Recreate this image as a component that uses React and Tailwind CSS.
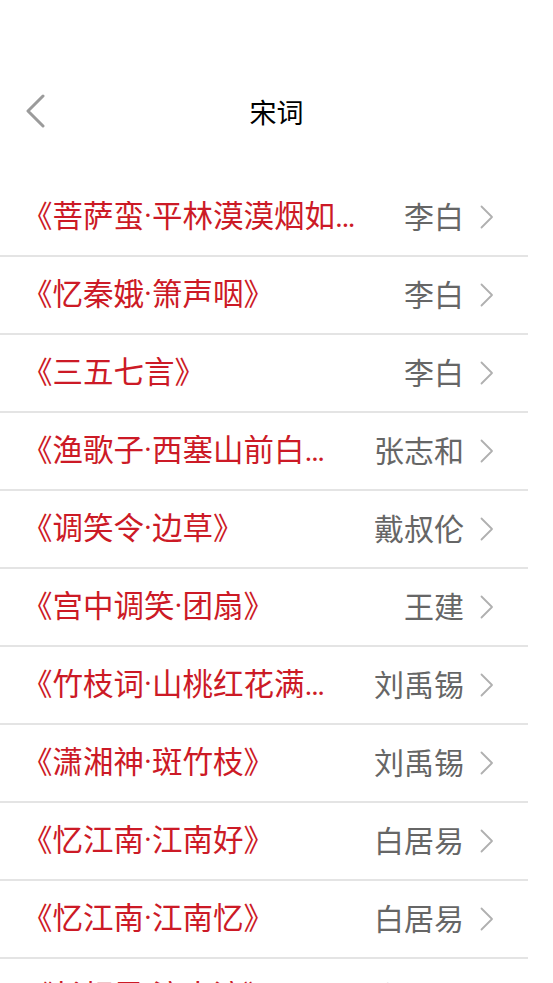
import React from "react";

const poems = [
  { title: "《菩萨蛮·平林漠漠烟如织》", author: "李白" },
  { title: "《忆秦娥·箫声咽》", author: "李白" },
  { title: "《三五七言》", author: "李白" },
  { title: "《渔歌子·西塞山前白鹭飞》", author: "张志和" },
  { title: "《调笑令·边草》", author: "戴叔伦" },
  { title: "《宫中调笑·团扇》", author: "王建" },
  { title: "《竹枝词·山桃红花满上头》", author: "刘禹锡" },
  { title: "《潇湘神·斑竹枝》", author: "刘禹锡" },
  { title: "《忆江南·江南好》", author: "白居易" },
  { title: "《忆江南·江南忆》", author: "白居易" },
  { title: "《长相思·汴水流》", author: "白居易" },
];

function BackIcon() {
  return (
    <svg width="22" height="34" viewBox="0 0 22 34" fill="none">
      <polyline
        points="19,2 4,17 19,32"
        stroke="#9b9b9b"
        strokeWidth="3"
        strokeLinecap="round"
        strokeLinejoin="round"
      />
    </svg>
  );
}

function Chevron() {
  return (
    <svg width="14" height="24" viewBox="0 0 14 24" fill="none">
      <polyline
        points="1.5,1.5 12,12 1.5,22.5"
        stroke="#b0b0b0"
        strokeWidth="1.8"
        strokeLinecap="round"
        strokeLinejoin="round"
      />
    </svg>
  );
}

function PoemRow({ title, author }) {
  return (
    <div className="flex h-[78px] w-[528px] items-center border-b-2 border-[#e4e4e4] pl-[22px] pr-[34px] font-['Roboto','Noto_Sans_CJK_SC',sans-serif]">
      <div className="min-w-0 flex-1 truncate pt-[1px] text-[30.5px] leading-none text-[#cc1a26]">
        {title}
      </div>
      <div className="ml-[30px] shrink-0 pt-[1px] text-[30px] leading-none text-[#666666]">
        {author}
      </div>
      <div className="ml-[16px] shrink-0">
        <Chevron />
      </div>
    </div>
  );
}

export default function App() {
  return (
    <div className="h-[983px] w-[553px] overflow-hidden bg-white font-['Noto_Sans_CJK_SC',sans-serif]">
      {/* nav bar */}
      <div className="mt-[88px] mb-[45px] flex h-[46px] items-center">
        <div className="flex w-[90px] items-center pl-[24px]">
          <BackIcon />
        </div>
        <div className="flex-1 text-center text-[27px] leading-none text-black">宋词</div>
        <div className="w-[90px]" />
      </div>

      {/* list */}
      <div className="flex flex-col">
        {poems.map((p, i) => (
          <PoemRow key={i} title={p.title} author={p.author} />
        ))}
      </div>
    </div>
  );
}
